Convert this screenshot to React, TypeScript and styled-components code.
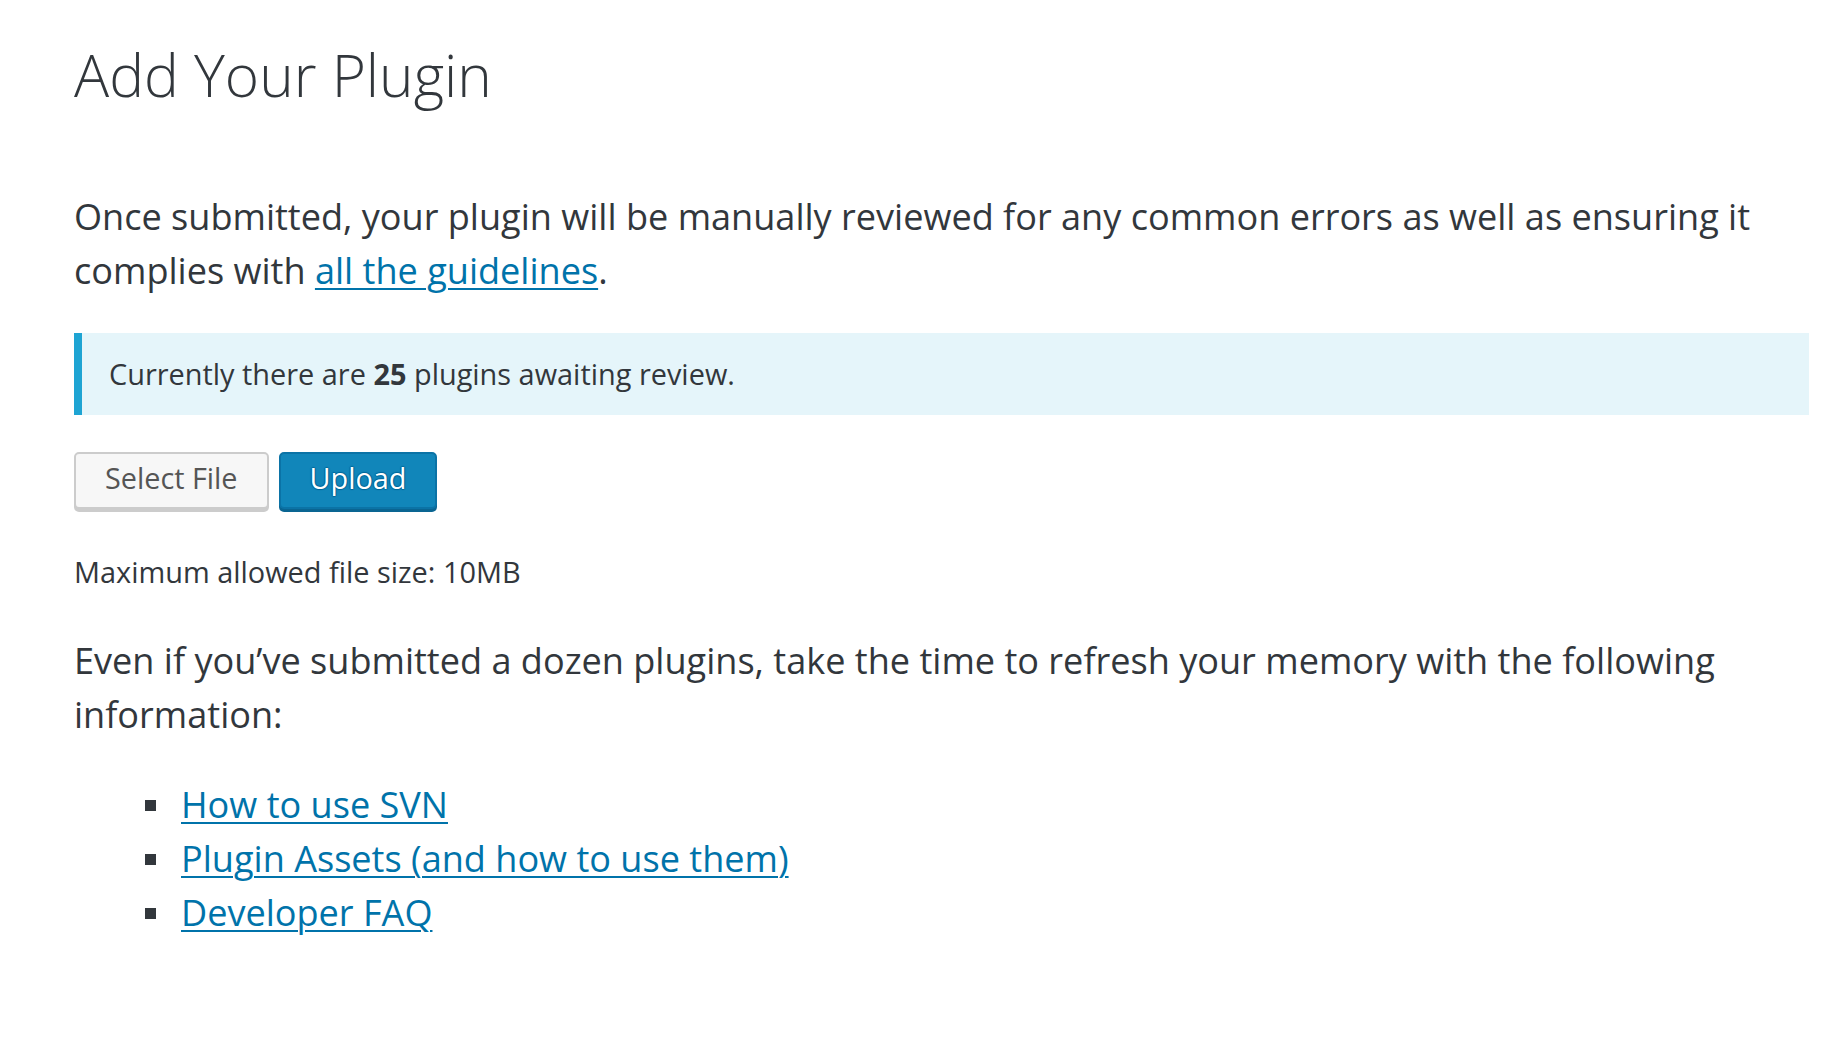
import React from "react";
import styled, { createGlobalStyle } from "styled-components";

const GlobalStyle = createGlobalStyle`
  html, body {
    margin: 0;
    padding: 0;
    background: #ffffff;
  }
  body {
    font-family: "Open Sans", "Noto Sans", "Liberation Sans", sans-serif;
    color: #32373c;
    -webkit-font-smoothing: antialiased;
  }
`;

const Page = styled.main`
  padding: 40px 32px 60px 74px;
  box-sizing: border-box;
  width: 100%;
`;

const Title = styled.h1`
  margin: 0 0 81px;
  font-size: 58.5px;
  font-weight: 300;
  line-height: 68px;
  color: #32373c;
`;

const Paragraph = styled.p<{ $gap?: number }>`
  margin: 0 0 ${(p) => (p.$gap ?? 36)}px;
  font-size: 36.1px;
  line-height: 54px;
  color: #32373c;
`;

const Link = styled.a`
  color: #0073aa;
  text-decoration: underline;
  text-decoration-thickness: 2px;
  text-underline-offset: 4px;
`;

const Notice = styled.div`
  margin: 0 0 37px;
  padding: 19.6px 27px;
  border-left: 8px solid #1ea4d3;
  background: #e5f5fa;
  font-size: 28.9px;
  line-height: 42.7px;
  color: #32373c;

  strong {
    font-weight: 700;
  }
`;

const ButtonRow = styled.div`
  display: flex;
  gap: 10px;
  margin: 0 0 42px;
`;

const Button = styled.button<{ $primary?: boolean }>`
  box-sizing: border-box;
  height: 57px;
  padding: 0 29px 3px;
  border-radius: 5px;
  font-family: "Open Sans", "Noto Sans", "Liberation Sans", sans-serif;
  font-size: 28.8px;
  line-height: 1;
  display: inline-flex;
  align-items: center;
  cursor: pointer;
  border: 2px solid ${(p) => (p.$primary ? "#0b73a6" : "#cccccc")};
  background: ${(p) => (p.$primary ? "#1186ba" : "#f7f7f7")};
  color: ${(p) => (p.$primary ? "#ffffff" : "#555555")};
  box-shadow: 0 3px 0 ${(p) => (p.$primary ? "#0a6592" : "#cccccc")};
  text-shadow: ${(p) =>
    p.$primary ? "0 -1px 1px #006799, 1px 0 1px #006799, 0 1px 1px #006799, -1px 0 1px #006799" : "none"};
`;

const SmallText = styled.p`
  margin: 0 0 39px;
  font-size: 28.9px;
  line-height: 42.7px;
  color: #32373c;
`;

const List = styled.ul`
  margin: 0;
  padding: 0 0 0 71px;
  list-style: none;
`;

const Item = styled.li`
  display: flex;
  align-items: flex-start;
  font-size: 36.1px;
  line-height: 54px;

  &::before {
    content: "";
    flex: none;
    width: 11px;
    height: 11px;
    margin: 23px 25px 0 0;
    background: #32373c;
  }
`;

export default function App() {
  return (
    <>
      <GlobalStyle />
      <Page>
        <Title>Add Your Plugin</Title>
        <Paragraph>
          Once submitted, your plugin will be manually reviewed for any common errors as well as
          ensuring it complies with <Link href="#">all the guidelines</Link>.
        </Paragraph>
        <Notice>
          Currently there are <strong>25</strong> plugins awaiting review.
        </Notice>
        <ButtonRow>
          <Button type="button">Select File</Button>
          <Button type="button" $primary>
            Upload
          </Button>
        </ButtonRow>
        <SmallText>Maximum allowed file size: 10MB</SmallText>
        <Paragraph $gap={36}>
          Even if you’ve submitted a dozen plugins, take the time to refresh your memory with the
          following information:
        </Paragraph>
        <List>
          <Item>
            <Link href="#">How to use SVN</Link>
          </Item>
          <Item>
            <Link href="#">Plugin Assets (and how to use them)</Link>
          </Item>
          <Item>
            <Link href="#">Developer FAQ</Link>
          </Item>
        </List>
      </Page>
    </>
  );
}
